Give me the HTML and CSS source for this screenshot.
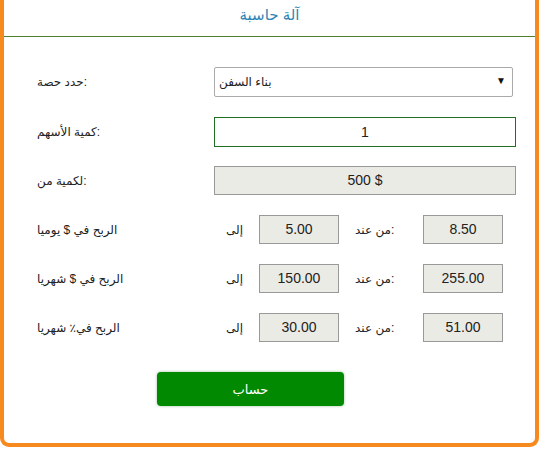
FILE: index.html
```html
<!DOCTYPE html>
<html lang="ar">
<head>
    <meta charset="UTF-8">
    <meta name="viewport" content="width=device-width, initial-scale=1.0">
    <title>آلة حاسبة</title>
    <link rel="stylesheet" href="styles.css">
</head>
<body>
    <div class="calc-box">
        <div class="calc-header">آلة حاسبة</div>

        <form class="calc-form" id="calcForm">
            <div class="form-row">
                <label for="stock">حدد حصة:</label>
                <div class="select-wrap">
                    <select id="stock" name="stock">
                        <option>بناء السفن</option>
                    </select>
                </div>
            </div>

            <div class="form-row">
                <label for="qty">كمية الأسهم:</label>
                <input type="text" id="qty" name="qty" class="qty-input" value="1">
            </div>

            <div class="form-row">
                <label>لكمية من:</label>
                <div class="out-box out-wide">500 $</div>
            </div>

            <div class="form-row">
                <label>الربح في $ يوميا</label>
                <div class="range">
                    <span class="to">إلى</span>
                    <div class="out-box">5.00</div>
                    <span class="from">من عند:</span>
                    <div class="out-box">8.50</div>
                </div>
            </div>

            <div class="form-row">
                <label>الربح في $ شهريا</label>
                <div class="range">
                    <span class="to">إلى</span>
                    <div class="out-box">150.00</div>
                    <span class="from">من عند:</span>
                    <div class="out-box">255.00</div>
                </div>
            </div>

            <div class="form-row">
                <label>الربح في٪ شهريا</label>
                <div class="range">
                    <span class="to">إلى</span>
                    <div class="out-box">30.00</div>
                    <span class="from">من عند:</span>
                    <div class="out-box">51.00</div>
                </div>
            </div>

            <button type="submit" class="calc-btn">حساب</button>
        </form>
    </div>
</body>
</html>
```

FILE: styles.css
```css
body {
    margin: 0;
    background: #fff;
    font-family: "Liberation Sans", "DejaVu Sans", sans-serif;
    color: #222;
}
.calc-box {
    width: 531px;
    border: 4px solid #f68a1f;
    border-top: none;
    border-radius: 0 0 9px 9px;
    background: #fff;
}
.calc-header {
    height: 36px;
    line-height: 30px;
    text-align: center;
    font-size: 15px;
    color: #2d84b4;
    border-bottom: 1px solid #4f7f2c;
}
.calc-form {
    padding: 30px 0 37px 33px;
    display: flex;
    flex-direction: column;
    gap: 20px;
}
.form-row {
    display: flex;
    align-items: center;
    height: 29px;
}
.form-row:first-child {
    height: 30px;
}
.form-row label {
    width: 177px;
    font-size: 12px;
}
.select-wrap {
    position: relative;
    width: 299px;
    height: 30px;
}
.select-wrap select {
    appearance: none;
    -webkit-appearance: none;
    width: 100%;
    height: 100%;
    border: 1px solid #aaa;
    border-radius: 2px;
    background: #fff;
    padding: 0 4px;
    font-family: inherit;
    font-size: 12px;
    color: #222;
}
.select-wrap::after {
    content: "▼";
    position: absolute;
    right: 7px;
    top: 8px;
    font-size: 10px;
    color: #111;
    pointer-events: none;
}
.qty-input {
    width: 302px;
    height: 30px;
    box-sizing: border-box;
    border: 1px solid #1f6d1f;
    text-align: center;
    font-family: inherit;
    font-size: 14px;
    color: #222;
}
.out-box {
    width: 80px;
    height: 29px;
    box-sizing: border-box;
    border: 1px solid #999;
    background: #ebebe5;
    font-size: 14px;
    line-height: 27px;
    text-align: center;
}
.out-wide {
    width: 302px;
}
.range {
    display: flex;
    align-items: center;
}
.range span {
    font-size: 12px;
}
.range .to {
    width: 29px;
    padding-right: 16px;
    text-align: right;
}
.range .from {
    width: 84px;
    padding-left: 16px;
    box-sizing: border-box;
}
.calc-btn {
    margin: 10px 0 0 120px;
    width: 187px;
    height: 34px;
    border: none;
    border-radius: 4px;
    background: #018a01;
    color: #fff;
    font-family: inherit;
    font-size: 13px;
    box-shadow: 0 0 3px rgba(0, 100, 0, 0.4);
    cursor: pointer;
}
```
